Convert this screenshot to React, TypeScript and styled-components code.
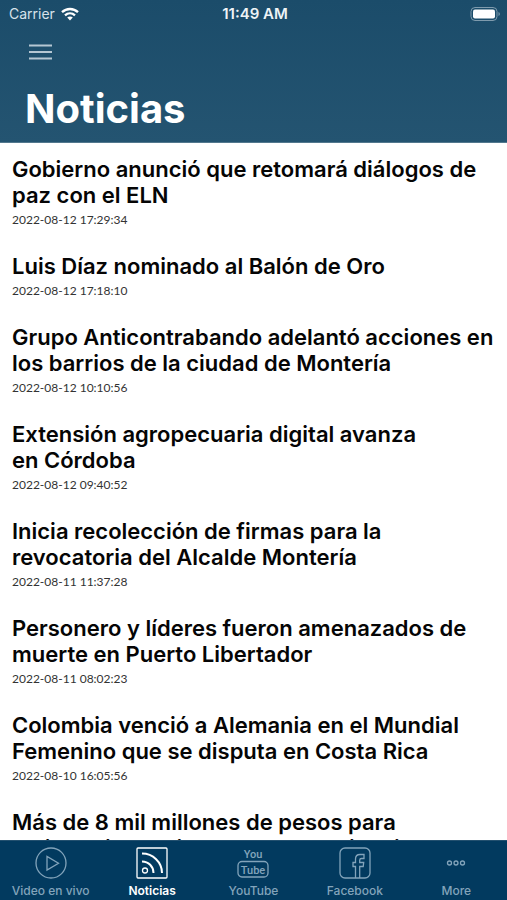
import React from "react";
import styled, { createGlobalStyle } from "styled-components";

const GlobalStyle = createGlobalStyle`
  *, *::before, *::after { box-sizing: border-box; }
  body { margin: 0; background: #fff; font-family: Inter, "Liberation Sans", sans-serif; }
  h1, h2, p, ul { margin: 0; padding: 0; }
  ul { list-style: none; }
`;

const Screen = styled.div`
  display: flex;
  flex-direction: column;
  height: 100vh;
  overflow: hidden;
  background: #fff;
`;

const Header = styled.header`
  flex: none;
  color: #fff;
  background: linear-gradient(#1b4c6a, #245471);
  border-bottom: 1px solid #52788e;
`;

const StatusBar = styled.div`
  display: grid;
  grid-template-columns: 1fr auto 1fr;
  align-items: center;
  height: 27px;
  padding: 0 6px 0 9px;
  font-size: 14px;
`;

const Carrier = styled.span`
  display: flex;
  align-items: center;
  gap: 6px;
  color: #d7e2ea;
`;

const Clock = styled.time`
  font-size: 15px;
  font-weight: 600;
  color: #eef3f6;
`;

const BatteryIcon = styled.svg`
  justify-self: end;
`;

const MenuButton = styled.button`
  display: block;
  margin: 10px 0 0 23px;
  padding: 6px;
  border: 0;
  background: none;
  color: #b5c7d3;
  line-height: 0;
`;

const PageTitle = styled.h1`
  padding: 18px 25px 9px;
  font-size: 40px;
  line-height: 48px;
  font-weight: 700;
`;

const NewsList = styled.ul`
  flex: 1;
  min-height: 0;
  overflow: hidden;
  padding-top: 13px;
`;

const NewsItem = styled.li`
  padding: 0 12px 25px;
`;

const Headline = styled.h2`
  font-size: 22px;
  line-height: 26px;
  font-weight: 600;
  color: #050505;
`;

const Stamp = styled.time`
  display: block;
  padding-top: 4px;
  font-family: Lato, "Liberation Sans", sans-serif;
  font-size: 12px;
  line-height: 16px;
  color: #333;
`;

const TabBar = styled.nav`
  flex: none;
  display: grid;
  grid-template-columns: repeat(5, 1fr);
  height: 60px;
  background: #023a5f;
  border-top: 1px solid #23506f;
`;

const Tab = styled.a<{ $active?: boolean }>`
  display: flex;
  flex-direction: column;
  align-items: center;
  gap: 4px;
  padding-top: 6px;
  color: ${(p) => (p.$active ? "#fff" : "#83a4bb")};
  font-size: 12px;
  line-height: 16px;
  font-weight: ${(p) => (p.$active ? 600 : 500)};
  text-decoration: none;
  white-space: nowrap;
`;

const TabIcon = styled.svg`
  display: block;
  width: 32px;
  height: 32px;
  fill: none;
  stroke: currentColor;
  stroke-width: 1.3;
`;

const LogoText = styled.text`
  fill: currentColor;
  stroke: none;
  font-family: Roboto, "Liberation Sans", sans-serif;
  font-size: 11px;
  font-weight: 500;
  text-anchor: middle;
`;

const news: { title: string; at?: string }[] = [
  { title: "Gobierno anunció que retomará diálogos de paz con el ELN", at: "2022-08-12 17:29:34" },
  { title: "Luis Díaz nominado al Balón de Oro", at: "2022-08-12 17:18:10" },
  { title: "Grupo Anticontrabando adelantó acciones en los barrios de la ciudad de Montería", at: "2022-08-12 10:10:56" },
  { title: "Extensión agropecuaria digital avanza en\u00a0Córdoba", at: "2022-08-12 09:40:52" },
  { title: "Inicia recolección de firmas para la revocatoria del Alcalde Montería", at: "2022-08-11 11:37:28" },
  { title: "Personero y líderes fueron amenazados de muerte en Puerto Libertador", at: "2022-08-11 08:02:23" },
  { title: "Colombia venció a Alemania en el Mundial Femenino que se disputa en Costa Rica", at: "2022-08-10 16:05:56" },
  { title: "Más de 8 mil millones de pesos para mejoramiento vial de la margen izquierda de" },
];

const tabs: { label: string; active?: boolean; icon: React.ReactNode }[] = [
  {
    label: "Video en vivo",
    icon: (
      <>
        <circle cx="16" cy="16" r="15" />
        <path d="M12 9.5v13.5l11.500-6.750z" />
      </>
    ),
  },
  {
    label: "Noticias",
    active: true,
    icon: (
      <>
        <rect x="1" y="1" width="30" height="30" rx="1" />
        <circle cx="9" cy="23.500" r="2.500" />
        <path d="M6 14.500c6.500 0 11.500 5 11.500 11.500M6 6.500c11 0 20 8.700 20 19.500" strokeWidth="2" />
      </>
    ),
  },
  {
    label: "YouTube",
    icon: (
      <>
        <LogoText x="16" y="11">You</LogoText>
        <rect x="1" y="14.500" width="30" height="15.500" rx="4" />
        <LogoText x="16" y="26.500">Tube</LogoText>
      </>
    ),
  },
  {
    label: "Facebook",
    icon: (
      <>
        <rect x="1" y="1" width="30" height="30" rx="5" />
        <path d="M16.500 31V19.500H14v-4h2.500V12c0-3 2-4.500 4.500-4.500h4v4h-2.500c-1.300 0-1.800.500-1.800 1.700v2.300h4l-.500 4h-3.500V31" />
      </>
    ),
  },
  {
    label: "More",
    icon: (
      <>
        <circle cx="9.500" cy="16" r="2" />
        <circle cx="16" cy="16" r="2" />
        <circle cx="22.500" cy="16" r="2" />
      </>
    ),
  },
];

export default function App() {
  return (
    <Screen>
      <GlobalStyle />
      <Header>
        <StatusBar>
          <Carrier>
            Carrier
            <svg width="18" height="14" viewBox="0 0 18 14" fill="none" stroke="#fff" strokeWidth="2.300" aria-hidden="true">
              <path d="M1 5.200C5.500.900 12.500.900 17 5.200M4 8.400c2.900-2.700 7.100-2.700 10 0" />
              <path d="M9 13.500l-2.800-3c1.600-1.400 4-1.400 5.600 0z" fill="#fff" stroke="none" />
            </svg>
          </Carrier>
          <Clock>11:49 AM</Clock>
          <BatteryIcon width="31" height="14" viewBox="0 0 31 14" aria-hidden="true">
            <rect x="1" y="0.500" width="26" height="13" rx="4" fill="none" stroke="#7f9bad" />
            <rect x="3" y="2.500" width="22" height="9" rx="2" fill="#fff" />
            <path d="M28.500 5v4c1.800-.700 1.800-3.300 0-4z" fill="#7f9bad" />
          </BatteryIcon>
        </StatusBar>
        <MenuButton aria-label="Menú">
          <svg width="23" height="18" viewBox="0 0 23 18" stroke="currentColor" strokeWidth="2.200">
            <path d="M0 2.500h23M0 9h23M0 15.500h23" />
          </svg>
        </MenuButton>
        <PageTitle>Noticias</PageTitle>
      </Header>
      <NewsList>
        {news.map((n) => (
          <NewsItem key={n.title}>
            <Headline>{n.title}</Headline>
            {n.at && <Stamp>{n.at}</Stamp>}
          </NewsItem>
        ))}
      </NewsList>
      <TabBar>
        {tabs.map((t) => (
          <Tab key={t.label} href="#" $active={t.active} aria-current={t.active ? "page" : undefined}>
            <TabIcon viewBox="0 0 32 32" aria-hidden="true">{t.icon}</TabIcon>
            {t.label}
          </Tab>
        ))}
      </TabBar>
    </Screen>
  );
}
